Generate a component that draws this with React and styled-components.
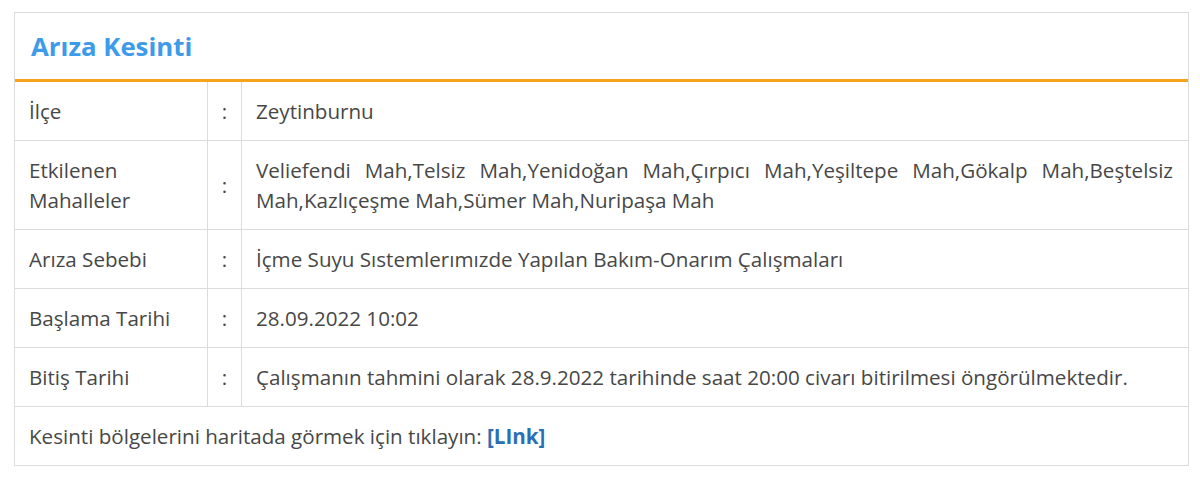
import React from 'react'
import styled, { createGlobalStyle } from 'styled-components'

const Global = createGlobalStyle`
  body {
    margin: 0;
    background: #fff;
    font-family: "Open Sans", "Noto Sans", sans-serif;
  }
`

const Page = styled.div`
  padding: 12px 11px 0 14px;
`

const Panel = styled.div`
  border: 1px solid #dcdcdc;
  background: #fff;
`

const Header = styled.div`
  height: 66px;
  padding: 0 16px;
  display: flex;
  align-items: center;
  border-bottom: 3px solid #f7a21b;
`

const Title = styled.h2`
  margin: 0;
  font-size: 25.8px;
  font-weight: 700;
  color: #3d9be9;
`

const Table = styled.table`
  width: 100%;
  border-collapse: collapse;
  font-size: 20.6px;
  color: #474747;
`

const Cell = styled.td`
  border-top: ${p => (p.$first ? 'none' : '1px solid #dcdcdc')};
  border-left: ${p => (p.$edge ? 'none' : '1px solid #dcdcdc')};
  padding: 14px 15px 14px 14px;
  line-height: 30px;
  vertical-align: middle;
  text-align: ${p => (p.$justify ? 'justify' : 'left')};
`

const LabelCell = styled(Cell)`
  width: 163px;
`

const Colon = styled(Cell)`
  width: 33px;
  padding: 14px 0;
  text-align: center;
`

const Link = styled.a`
  color: #2a6fb5;
  font-weight: 700;
  text-decoration: none;
`

const rows = [
  ['İlçe', 'Zeytinburnu'],
  [
    'Etkilenen Mahalleler',
    'Veliefendi Mah,Telsiz Mah,Yenidoğan Mah,Çırpıcı Mah,Yeşiltepe Mah,Gökalp Mah,Beştelsiz Mah,Kazlıçeşme Mah,Sümer Mah,Nuripaşa Mah',
    true,
  ],
  ['Arıza Sebebi', 'İçme Suyu Sıstemlerımızde Yapılan Bakım-Onarım Çalışmaları'],
  ['Başlama Tarihi', '28.09.2022 10:02'],
  ['Bitiş Tarihi', 'Çalışmanın tahmini olarak 28.9.2022 tarihinde saat 20:00 civarı bitirilmesi öngörülmektedir.'],
]

export default function App() {
  return (
    <Page>
      <Global />
      <Panel>
        <Header>
          <Title>Arıza Kesinti</Title>
        </Header>
        <Table>
          <tbody>
            {rows.map(([label, value, justify], i) => (
              <tr key={label}>
                <LabelCell $first={i === 0} $edge>{label}</LabelCell>
                <Colon $first={i === 0}>:</Colon>
                <Cell $first={i === 0} $justify={justify}>{value}</Cell>
              </tr>
            ))}
            <tr>
              <Cell colSpan={3} $edge>
                Kesinti bölgelerini haritada görmek için tıklayın: <Link href="#">[LInk]</Link>
              </Cell>
            </tr>
          </tbody>
        </Table>
      </Panel>
    </Page>
  )
}
